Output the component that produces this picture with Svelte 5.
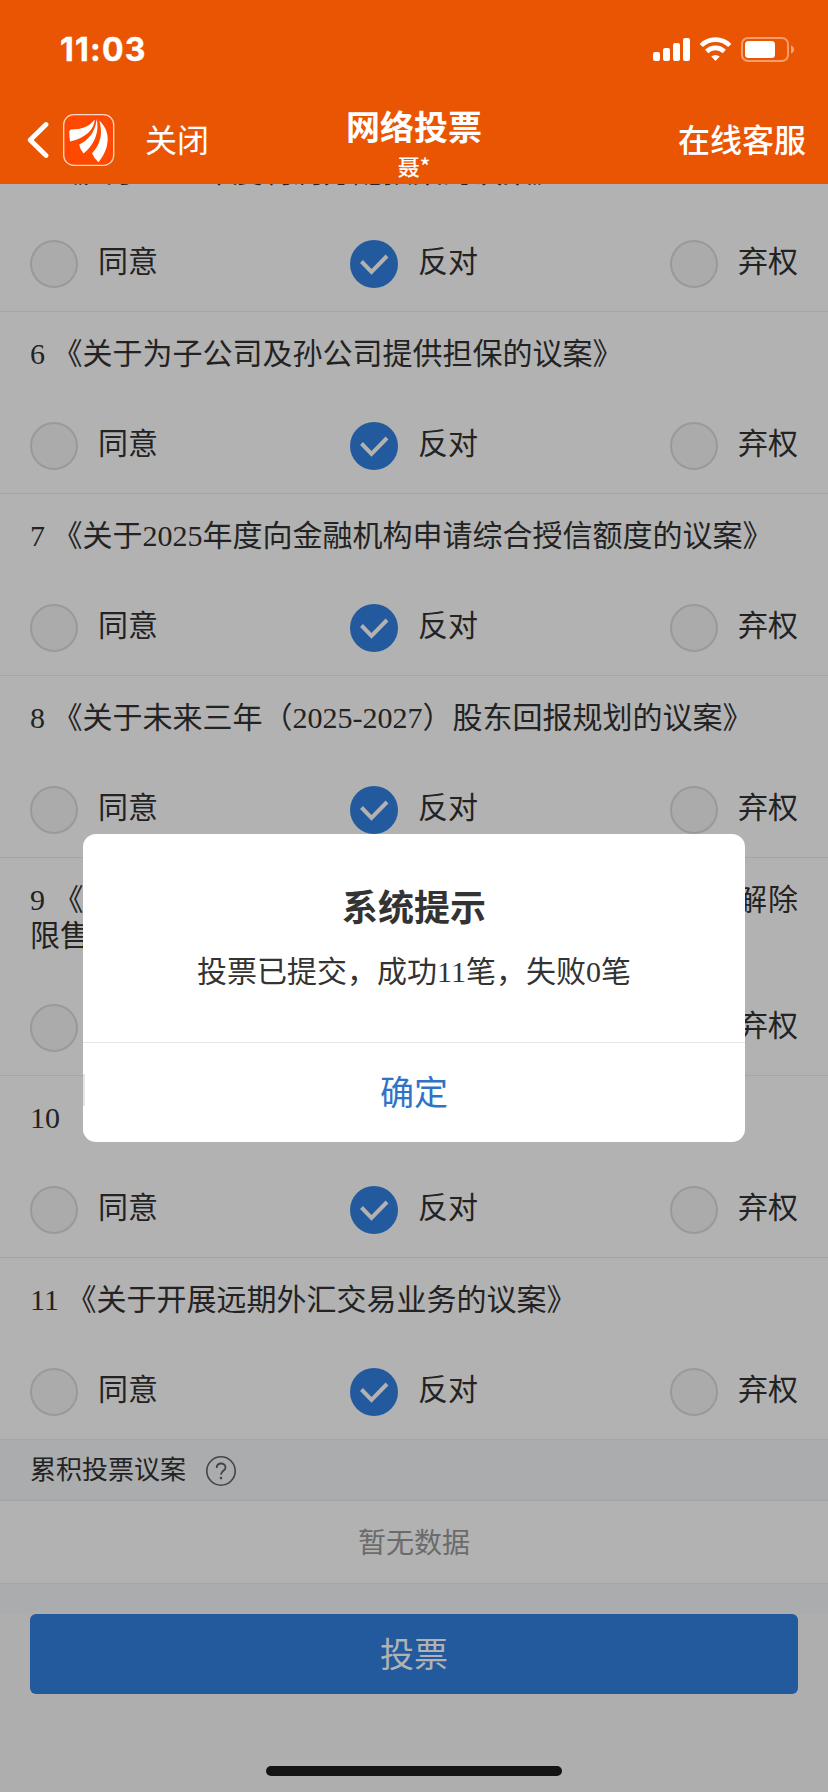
<script>
  const items = [
    { no: 5, title: '《关于2024年度利润分配预案的议案》' },
    { no: 6, title: '《关于为子公司及孙公司提供担保的议案》' },
    { no: 7, title: '《关于2025年度向金融机构申请综合授信额度的议案》' },
    { no: 8, title: '《关于未来三年（2025-2027）股东回报规划的议案》' },
    { no: 9, title: '《关于公司2022年限制性股票激励计划第三限售期解除限售条件成就的议案》' },
    { no: 10, title: '《关于回购注销的议案》' },
    { no: 11, title: '《关于开展远期外汇交易业务的议案》' }
  ];
  const options = ['同意', '反对', '弃权'];
  const chosen = 1;
</script>

<div class="screen">
  <header>
    <div class="status">
      <span class="time">11:03</span>
      <svg class="signals" width="142" height="26" viewBox="0 0 142 26">
        <g fill="#fff">
          <rect x="0" y="15" width="7" height="9" rx="2" />
          <rect x="10" y="11" width="7" height="13" rx="2" />
          <rect x="20" y="6" width="7" height="18" rx="2" />
          <rect x="30" y="1" width="7" height="23" rx="2" />
          <path d="M62.500 24 L58.300 19.600 Q62.500 16.200 66.700 19.600 Z" />
        </g>
        <g fill="none" stroke="#fff" stroke-width="4.600">
          <path d="M48.200 8.500 C56 0.600 69 0.600 76.800 8.500" />
          <path d="M53.700 14.500 C58.500 9.700 66.500 9.700 71.300 14.500" />
        </g>
        <rect x="89" y="1" width="46" height="23" rx="6" fill="none" stroke="#fff" stroke-opacity=".42" stroke-width="2" />
        <rect x="92" y="4" width="30" height="17" rx="3.500" fill="#fff" />
        <path d="M138 8.500 Q141 9.500 141 12.500 Q141 15.500 138 16.500 Z" fill="#fff" fill-opacity=".45" />
      </svg>
    </div>
    <nav>
      <div class="left">
        <svg class="back" width="22" height="38" viewBox="0 0 22 38">
          <path d="M19 3.500 L3.200 19 L19 34.500" fill="none" stroke="#fff" stroke-width="4.800" stroke-linecap="round" stroke-linejoin="round" />
        </svg>
        <svg class="logo" width="52" height="52" viewBox="0 0 52 52">
          <rect x=".7" y=".7" width="50" height="50.600" rx="10" fill="#ff4800" stroke="#ffd9c6" stroke-width="1.300" />
          <g fill="#fff">
            <path d="M6.300 18.500 Q6 16 8.500 15.600 C18 15.200 26 13 31.800 5.500 C31 16 23 23.500 7 27.600 Q6.300 23 6.300 18.500 Z" />
            <path d="M33.600 5 C37 19 30 32 20.500 39.600 Q17 35.500 16.200 30.500 C25 26.500 32.500 18 33.600 5 Z" />
            <path d="M36.200 6.500 C50 19 45 37 35.500 48.300 Q31 44.500 29 39.200 C38 30 40 19 36.200 6.500 Z" />
          </g>
        </svg>
        <span class="close">关闭</span>
      </div>
      <div class="heading">
        <b>网络投票</b>
        <small>聂*</small>
      </div>
      <span class="service">在线客服</span>
    </nav>
  </header>

  <main>
    {#each items as item}
      <section class="item">
        <p>{item.no} {item.title}</p>
        <div class="options">
          {#each options as option, i}
            <label>
              <svg width="48" height="48" viewBox="0 0 48 48">
                {#if i === chosen}
                  <circle cx="24" cy="24" r="24" fill="#235a9e" />
                  <path d="M11.500 21.500 L21.500 31.800 L37 16" fill="none" stroke="#b2b2b2" stroke-width="4" />
                {:else}
                  <circle cx="24" cy="24" r="23" fill="#ababab" stroke="#999" stroke-width="2" />
                {/if}
              </svg>
              <span>{option}</span>
            </label>
          {/each}
        </div>
      </section>
    {/each}
    <div class="group">
      <span>累积投票议案</span>
      <svg width="30" height="30" viewBox="0 0 30 30" fill="none" stroke="#444">
        <circle cx="15" cy="15" r="14.200" stroke-width="1.600" />
        <path d="M10.700 12 C10.700 6 19.500 6.200 19.500 11.500 C19.500 15 15 14.700 15 18.800" stroke-width="1.800" />
        <path d="M15 20.800 V23.200" stroke-width="2.200" />
      </svg>
    </div>
    <div class="empty">暂无数据</div>
    <div class="strip"></div>
    <div class="footer">
      <button>投票</button>
      <div class="home"></div>
    </div>
  </main>

  <div class="dialog" role="alertdialog">
    <div class="body">
      <h2>系统提示</h2>
      <p>投票已提交，成功11笔，失败0笔</p>
    </div>
    <div class="confirm">确定</div>
  </div>
</div>

<style>
  :global(body) { background: #aeaeae; }
  .screen {
    position: relative;
    display: flex;
    flex-direction: column;
    width: 828px;
    height: 1792px;
    overflow: hidden;
    background: #b2b2b2;
    color: #232323;
    font-family: "Liberation Serif", "Noto Sans CJK SC", sans-serif;
    font-size: 30px;
  }
  header {
    flex: none;
    height: 184px;
    background: #ea5504;
    color: #fff;
    font-family: "Noto Sans CJK SC", sans-serif;
    z-index: 1;
  }
  .status {
    display: flex;
    justify-content: space-between;
    align-items: flex-start;
    height: 96px;
    box-sizing: border-box;
    padding: 30px 33px 0 60px;
  }
  .time { font: 700 32px/40px Inter, sans-serif; letter-spacing: 1.2px; -webkit-text-stroke: .4px #fff; }
  .signals { margin-top: 7px; }
  nav {
    display: grid;
    grid-template-columns: 1fr auto 1fr;
    height: 88px;
  }
  .left { display: flex; align-items: center; padding: 0 0 0 27px; }
  .logo { margin-left: 14px; }
  .close { margin: -4px 0 0 30px; font-size: 32px; line-height: 40px; }
  .heading { display: flex; flex-direction: column; align-items: center; padding-top: 10px; }
  .heading b { font-size: 34px; line-height: 40px; font-weight: 600; }
  .heading small { font-size: 22px; line-height: 30px; font-weight: 500; margin-top: 4px; }
  .service { justify-self: end; padding-right: 22px; font-size: 32px; font-weight: 500; line-height: 84px; }

  main { margin-top: -54px; }
  .item { padding: 24px 30px 0; border-bottom: 1px solid #a5a5a5; }
  .item p { margin: 0 0 50px; line-height: 36px; text-align: justify; }
  .options { display: flex; justify-content: space-between; padding-bottom: 23px; }
  label { display: flex; gap: 20px; height: 48px; }
  label span { line-height: 44px; }
  .group {
    display: flex;
    align-items: center;
    gap: 20px;
    height: 60px;
    padding: 0 30px;
    border-bottom: 1px solid #a3a4a5;
    background: #abacae;
    font-size: 26px;
  }
  .group span { line-height: 40px; margin-top: 1px; }
  .group svg { margin-top: 2px; }
  .empty {
    height: 82px;
    border-bottom: 1px solid #a5a5a5;
    line-height: 85px;
    text-align: center;
    font-size: 28px;
    color: #6b6b6b;
  }
  .strip { height: 30px; background: #abacae; }
  .footer { display: flex; flex-direction: column; align-items: center; height: 178px; background: #aeaeae; }
  button {
    width: 768px;
    height: 80px;
    border: 0;
    border-radius: 6px;
    padding: 0 0 2px;
    background: #235a9e;
    color: #b2b2b2;
    font: 34px/78px "Noto Sans CJK SC", sans-serif;
  }
  .home { width: 296px; height: 10px; margin-top: 72px; border-radius: 5px; background: #141414; }

  .dialog {
    position: absolute;
    left: 83px;
    top: 834px;
    z-index: 2;
    width: 662px;
    height: 308px;
    border-radius: 13px;
    background: #fff;
    color: #333;
    text-align: center;
  }
  .body { height: 209px; border-bottom: 1px solid #e6e6e6; box-sizing: border-box; padding-top: 47px; }
  h2 { margin: 0; font: 700 36px/48px "Noto Sans CJK SC", sans-serif; }
  .body p { margin: 23px 0 0; line-height: 40px; }
  .confirm { position: relative; line-height: 102px; font-size: 34px; color: #2e73c6; }
  .confirm::before {
    content: "";
    position: absolute;
    left: 0;
    top: 31px;
    width: 2px;
    height: 32px;
    background: #e5e5e5;
  }
</style>
